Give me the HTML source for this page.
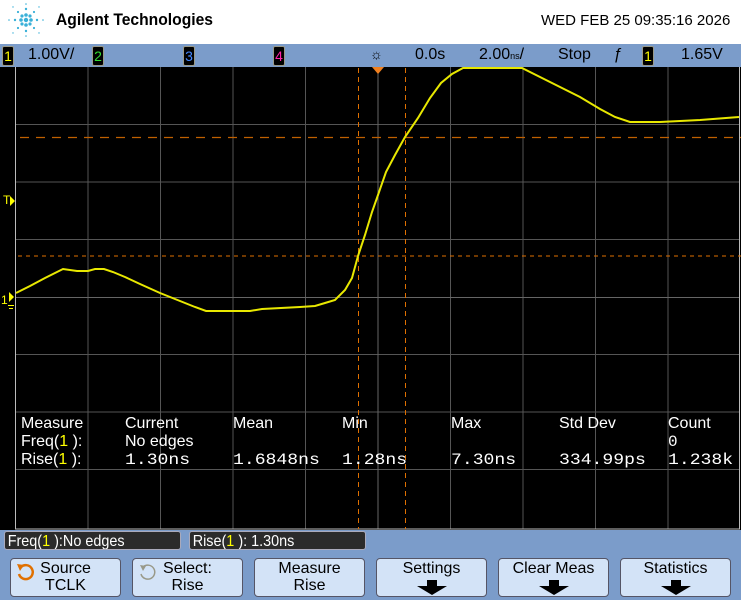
<!DOCTYPE html>
<html><head><style>
body{margin:0;width:741px;height:600px;overflow:hidden;background:#7b9cca;font-family:"Liberation Sans",sans-serif;position:relative}
.hdr{position:absolute;left:0;top:0;width:741px;height:44px;background:#fff}
.bar{position:absolute;left:0;top:44px;width:741px;height:23px;background:#7b9cca;font-size:16px;color:#000}
.bar span{position:absolute;top:2px}
.ch{position:absolute;top:2px;width:10px;height:18px;background:#000;border:1px solid #998;border-radius:2px;font-size:14px;text-align:center;line-height:18px}
.stat{position:absolute;top:531px;height:19px;background:#2b2b2b;border:1px solid #aab;border-radius:3px;color:#fff;font-size:16px;line-height:19px;box-sizing:border-box;overflow:hidden}
.stat div{transform:scaleX(.9);transform-origin:left;white-space:nowrap;padding-left:3px}
.btn{position:absolute;top:558px;width:111px;height:39px;background:#d3e3f7;border:1px solid #556;border-radius:4px;box-sizing:border-box;text-align:center;font-size:16px;line-height:17px;color:#000;padding-top:1px}
.y{color:#ffff00}
.arr{width:0;height:0;margin:3px auto 0;border-left:15px solid transparent;border-right:15px solid transparent;border-top:9px solid #000;position:relative}
.arr:before{content:"";position:absolute;left:-5px;top:-15px;width:10px;height:7px;background:#000}
.m{position:absolute;top:1px}
.n{position:absolute;transform:scaleX(1.13);transform-origin:left}
</style></head><body>
<div class="hdr">
<svg style="position:absolute;left:4px;top:2px" width="44" height="36" viewBox="0 0 44 36">
<g fill="#3ab0d8">
<circle cx="22" cy="18" r="2.2"/><circle cx="17" cy="18" r="1.8"/><circle cx="27" cy="18" r="1.8"/><circle cx="22" cy="13" r="1.8"/><circle cx="22" cy="23" r="1.8"/>
<circle cx="18" cy="14" r="1.6"/><circle cx="26" cy="14" r="1.6"/><circle cx="18" cy="22" r="1.6"/><circle cx="26" cy="22" r="1.6"/>
<circle cx="11" cy="18" r="1.2"/><circle cx="33" cy="18" r="1.2"/><circle cx="22" cy="7" r="1.2"/><circle cx="22" cy="29" r="1.2"/>
<circle cx="14" cy="10" r="1.1"/><circle cx="30" cy="10" r="1.1"/><circle cx="14" cy="26" r="1.1"/><circle cx="30" cy="26" r="1.1"/>
<circle cx="5" cy="18" r=".8"/><circle cx="39" cy="18" r=".8"/><circle cx="22" cy="2" r=".8"/><circle cx="22" cy="34" r=".8"/>
<circle cx="9" cy="5" r=".7"/><circle cx="35" cy="5" r=".7"/><circle cx="9" cy="31" r=".7"/><circle cx="35" cy="31" r=".7"/>
</g></svg>
<div style="position:absolute;left:56px;top:10px;font-size:17px;font-weight:bold;transform:scaleX(.92);transform-origin:left">Agilent Technologies</div>
<div style="position:absolute;left:541px;top:12px;font-size:15px">WED FEB 25 09:35:16 2026</div>
</div>
<div class="bar">
<div class="ch y" style="left:2px">1</div><span style="left:28px">1.00V/</span>
<div class="ch" style="left:92px;color:#3d3">2</div>
<div class="ch" style="left:183px;color:#48f">3</div>
<div class="ch" style="left:273px;color:#f2a">4</div>
<span style="left:370px;font-size:14px">☼</span>
<span style="left:415px">0.0s</span>
<span style="left:479px">2.00<small style="font-size:9px">ns</small>/</span>
<span style="left:558px">Stop</span>
<span style="left:613px;font-style:italic">ƒ</span>
<div class="ch y" style="left:642px">1</div>
<span style="left:681px">1.65V</span>
</div>
<svg style="position:absolute;left:0;top:67px" width="741" height="463" viewBox="0 67 741 463">
<rect x="0" y="67" width="741" height="463" fill="#000"/>
<g stroke="#555" stroke-width="1">
<path d="M88 67V529M160.5 67V529M233 67V529M305.5 67V529M450.5 67V529M523 67V529M595.5 67V529M668 67V529"/>
<path d="M15 124.5H739M15 182H739M15 239.5H739M15 354.5H739M15 412H739M15 469.5H739"/>
</g>
<g stroke="#666"><path d="M378 67V529M15 297.5H739"/></g>
<path d="M15.5 67V529M15 529H740M739.5 67V529" stroke="#bbb" stroke-width="1"/>
<path d="M20 137.5H741" stroke="#c06000" stroke-width="1.3" stroke-dasharray="9,7"/>
<path d="M18 256H741" stroke="#e07000" stroke-width="1" stroke-dasharray="4,4"/>
<path d="M358.5 68V529M405.5 68V529" stroke="#e07000" stroke-width="1" stroke-dasharray="5,4"/>
<path d="M372 67H384L378 74Z" fill="#f08020"/>
<polyline fill="none" stroke="#e8e800" stroke-width="2" points="16,293 30,286 45,278 55,273 63,269 77,271 88,271 95,269 104,269 113,272 125,277 140,284 160,293 180,301 195,307 206,311 250,311 262,309 300,307 315,306 325,303 335,300 345,290 352,278 358,256 365,235 372,212 378,195 386,172 395,155 405,137 418,118 430,98 441,83 452,74 463,68 522,68 540,77 560,87 580,97 600,109 615,117 630,122 660,122 700,120 739,117"/>
<g fill="#ffff00" font-size="12" font-family="Liberation Sans,sans-serif"><text x="3" y="204">T</text><path d="M10 196l5 5-5 5z"/><text x="1" y="304">1</text><path d="M9 292l5 5-5 5z"/><path d="M8 305h6v1h-6zM9 308h4v1h-4z"/></g>
</svg>
<div style="position:absolute;left:0;top:414px;width:741px;color:#fff;font-size:16px;line-height:18px">
<div class="m" style="left:21px">Measure<br>Freq(<span class="y">1</span> ):<br>Rise(<span class="y">1</span> ):</div>
<div class="m" style="left:125px">Current<br>No edges</div>
<div class="m" style="left:233px">Mean</div>
<div class="m" style="left:342px">Min</div>
<div class="m" style="left:451px">Max</div>
<div class="m" style="left:559px">Std Dev</div>
<div class="m" style="left:668px">Count<br><span style="font-family:Liberation Mono,monospace">0</span></div>
<div style="position:absolute;top:37px;font-family:'Liberation Mono',monospace;font-size:16px;left:0">
<span class="n" style="left:125px">1.30ns</span><span class="n" style="left:233px">1.6848ns</span><span class="n" style="left:342px">1.28ns</span><span class="n" style="left:451px">7.30ns</span><span class="n" style="left:559px">334.99ps</span><span class="n" style="left:668px">1.238k</span></div>
</div>
<div class="stat" style="left:4px;width:177px"><div>Freq(<span class="y">1</span> ):No edges</div></div>
<div class="stat" style="left:189px;width:177px"><div>Rise(<span class="y">1</span> ): 1.30ns</div></div>
<div class="btn" style="left:10px"><svg style="position:absolute;left:4px;top:3px" width="22" height="20" viewBox="0 0 22 20"><path d="M6 5A7 7 0 1 1 4 12" fill="none" stroke="#e07000" stroke-width="2.5"/><path d="M2 2l7 1-4 6z" fill="#e07000"/></svg>Source<br>TCLK</div>
<div class="btn" style="left:132px"><svg style="position:absolute;left:4px;top:3px" width="22" height="20" viewBox="0 0 22 20"><path d="M6 5A7 7 0 1 1 4 12" fill="none" stroke="#998" stroke-width="1.5"/><path d="M3 3l6 1-3 5z" fill="#998"/></svg>Select:<br>Rise</div>
<div class="btn" style="left:254px">Measure<br>Rise</div>
<div class="btn" style="left:376px">Settings<div class="arr" style="margin-top:9px"></div></div>
<div class="btn" style="left:498px">Clear Meas<div class="arr" style="margin-top:9px"></div></div>
<div class="btn" style="left:620px">Statistics<div class="arr" style="margin-top:9px"></div></div>
</body></html>
